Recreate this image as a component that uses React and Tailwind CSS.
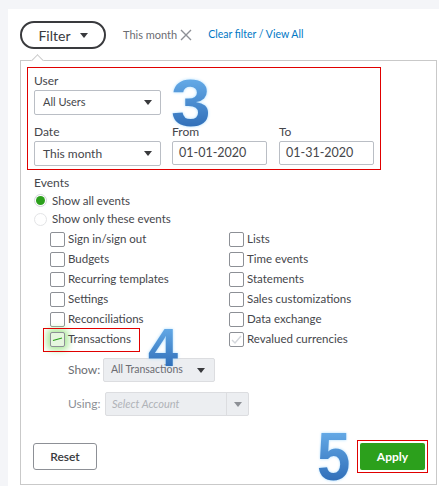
import { useState } from 'react';

const Caret = ({ className = 'fill-[#393a3d]' }) => (
    <svg width="8" height="5" viewBox="0 0 8 5" className={className}>
        <path d="M0 0h8L4 5z" />
    </svg>
);

const Marker = ({ children, className }) => (
    <span
        className={`absolute font-['Liberation_Sans',sans-serif] font-bold leading-none bg-gradient-to-b from-[#6fb6f0] to-[#2764b0] bg-clip-text text-transparent drop-shadow-[0_0_1.5px_#a9dcff] ${className}`}
    >
        {children}
    </span>
);

const Checkbox = ({ label, checked }) => (
    <div className="flex items-center h-[20px]">
        <span className="w-[15px] h-[15px] border border-[#8d9096] rounded-[2px] bg-white flex items-center justify-center">
            {checked && (
                <svg width="11" height="9" viewBox="0 0 11 9">
                    <path d="M1 5l3 3 6-7" fill="none" stroke="#d4d7dc" strokeWidth="1.4" />
                </svg>
            )}
        </span>
        <span className="ml-[3px]">{label}</span>
    </div>
);

const App = () => {
    const [showAll, setShowAll] = useState(true);

    const left = ['Sign in/sign out', 'Budgets', 'Recurring templates', 'Settings', 'Reconciliations'];
    const right = ['Lists', 'Time events', 'Statements', 'Sales customizations', 'Data exchange'];

    return (
        <div className="h-[486px] overflow-hidden bg-[#f4f5f8] pt-[9px] pl-[8px] font-['Lato',sans-serif] text-[11.5px] text-[#45464b]">
            <div className="bg-white h-full pl-[12px] pt-[12px]">
                {/* top bar */}
                <div className="flex items-center h-[28px]">
                    <button className="w-[86px] h-[28px] rounded-full border-2 border-[#393a3d] flex items-center justify-center gap-[9px] text-[14px] text-[#393a3d]">
                        <span>Filter</span>
                        <Caret />
                    </button>
                    <span className="ml-[17px] text-[11px] text-[#6b6c72]">This month</span>
                    <svg width="12" height="12" viewBox="0 0 12 12" className="ml-[3px]">
                        <path d="M1 1l10 10M11 1L1 11" stroke="#8d9096" strokeWidth="1.4" />
                    </svg>
                    <a className="ml-[16px] text-[10.5px] text-[#0077c5]">Clear filter / View All</a>
                </div>

                {/* dropdown panel */}
                <div className="relative mt-[11px] w-[417px] h-[425px] border border-[#c9c9c9] pl-[6px] pt-[6px]">
                    <span className="absolute -top-[5px] left-[12px] w-[9px] h-[9px] rotate-45 bg-white border-l border-t border-[#c9c9c9]" />

                    <div className="relative w-[354px] h-[103px] border border-[#e00000] pl-[6px] pt-[5px] text-[12px]">
                        <div className="leading-[16px]">User</div>
                        <div className="mt-[1px] w-[127px] h-[25px] border border-[#babec5] rounded-[2px] flex items-center justify-between px-[8px] text-[11px]">
                            <span>All Users</span>
                            <Caret />
                        </div>
                        <div className="mt-[9px] flex">
                            <div className="w-[127px]">
                                <div className="leading-[16px]">Date</div>
                                <div className="mt-[1px] h-[25px] border border-[#babec5] rounded-[2px] flex items-center justify-between px-[8px]">
                                    <span>This month</span>
                                    <Caret />
                                </div>
                            </div>
                            <div className="ml-[11px] w-[95px]">
                                <div className="leading-[16px]">From</div>
                                <div className="mt-[1px] h-[24px] border border-[#babec5] rounded-[2px] flex items-center px-[6px] text-[12.5px]">
                                    01-01-2020
                                </div>
                            </div>
                            <div className="ml-[12px] w-[95px]">
                                <div className="leading-[16px]">To</div>
                                <div className="mt-[1px] h-[24px] border border-[#babec5] rounded-[2px] flex items-center px-[6px] text-[12.5px]">
                                    01-31-2020
                                </div>
                            </div>
                        </div>
                        <Marker className="left-[143px] top-[2px] text-[66px] scale-x-[1.08] origin-left">3</Marker>
                    </div>

                    {/* events */}
                    <div className="pl-[7px]">
                        <div className="mt-[5px] leading-[16px] text-[12px]">Events</div>
                        <div className="flex flex-col">
                            <label className="flex items-center h-[19px] cursor-pointer" onClick={() => setShowAll(true)}>
                                <span className={`w-[13px] h-[13px] rounded-full border flex items-center justify-center ${showAll ? 'border-[#d4d7dc]' : 'border-[#e3e4e6]'}`}>
                                    {showAll && <span className="w-[9px] h-[9px] rounded-full bg-[#2ca01c]" />}
                                </span>
                                <span className="ml-[5px]">Show all events</span>
                            </label>
                            <label className="flex items-center h-[18px] cursor-pointer" onClick={() => setShowAll(false)}>
                                <span className={`w-[13px] h-[13px] rounded-full border flex items-center justify-center ${!showAll ? 'border-[#d4d7dc]' : 'border-[#e3e4e6]'}`}>
                                    {!showAll && <span className="w-[9px] h-[9px] rounded-full bg-[#2ca01c]" />}
                                </span>
                                <span className="ml-[5px]">Show only these events</span>
                            </label>
                        </div>

                        <div className="mt-[1px] pl-[16px] flex">
                            <div className="w-[179px] flex flex-col">
                                {left.map((l) => (
                                    <Checkbox key={l} label={l} />
                                ))}
                                <div className="relative flex items-center h-[20px]">
                                    <span className="w-[15px] h-[15px] border border-[#8d9096] rounded-[2px] bg-[#e6f6df] shadow-[0_0_7px_3px_#a8e796] flex items-center justify-center">
                                        <svg width="11" height="6" viewBox="0 0 11 6">
                                            <path d="M1 4.5L10 2" stroke="#2ca01c" strokeWidth="1.2" />
                                        </svg>
                                    </span>
                                    <span className="ml-[3px]">Transactions</span>
                                    <span className="absolute -left-[7px] top-[-1px] w-[97px] h-[24px] border border-[#e00000]" />
                                    <Marker className="left-[98px] -top-[9px] text-[54px]">4</Marker>
                                </div>
                            </div>
                            <div className="flex flex-col">
                                {right.map((r) => (
                                    <Checkbox key={r} label={r} />
                                ))}
                                <Checkbox label="Revalued currencies" checked />
                            </div>
                        </div>
                    </div>

                    {/* show / using */}
                    <div className="mt-[9px] pl-[41px] flex items-center">
                        <span className="w-[35px] text-[12px] text-[#6b6c72]">Show:</span>
                        <div className="w-[112px] h-[24px] border border-[#dcdde0] rounded-[2px] bg-[#eceef1] flex items-center justify-between pl-[7px] pr-[9px] text-[10.5px] text-[#6b6c72]">
                            <span>All Transactions</span>
                            <Caret />
                        </div>
                    </div>
                    <div className="mt-[10px] pl-[41px] flex items-center">
                        <span className="w-[37px] text-[12px] text-[#8d9096]">Using:</span>
                        <div className="w-[144px] h-[24px] border border-[#dcdde0] rounded-[2px] bg-[#eceef1] flex items-center text-[11px]">
                            <span className="flex-1 px-[6px] italic text-[#b0b3b8]">Select Account</span>
                            <span className="w-[22px] h-full border-l border-[#dcdde0] flex items-center justify-center">
                                <Caret className="fill-[#8d9096]" />
                            </span>
                        </div>
                    </div>

                    {/* footer */}
                    <div className="mt-[24px] flex items-center justify-between pr-[8px] pl-[6px]">
                        <button className="w-[64px] h-[27px] border border-[#8d9096] rounded-[3px] text-[12px] font-semibold text-[#393a3d]">
                            Reset
                        </button>
                        <div className="relative flex items-center">
                            <Marker className="-left-[40px] -top-[18px] text-[68px] scale-x-[0.88] origin-left">5</Marker>
                            <div className="border border-[#e00000] p-[2px]">
                                <button className="w-[65px] h-[27px] rounded-[2px] bg-[#2ca01c] text-white text-[12px] font-bold">
                                    Apply
                                </button>
                            </div>
                        </div>
                    </div>
                </div>
            </div>
        </div>
    );
};

export default App;
